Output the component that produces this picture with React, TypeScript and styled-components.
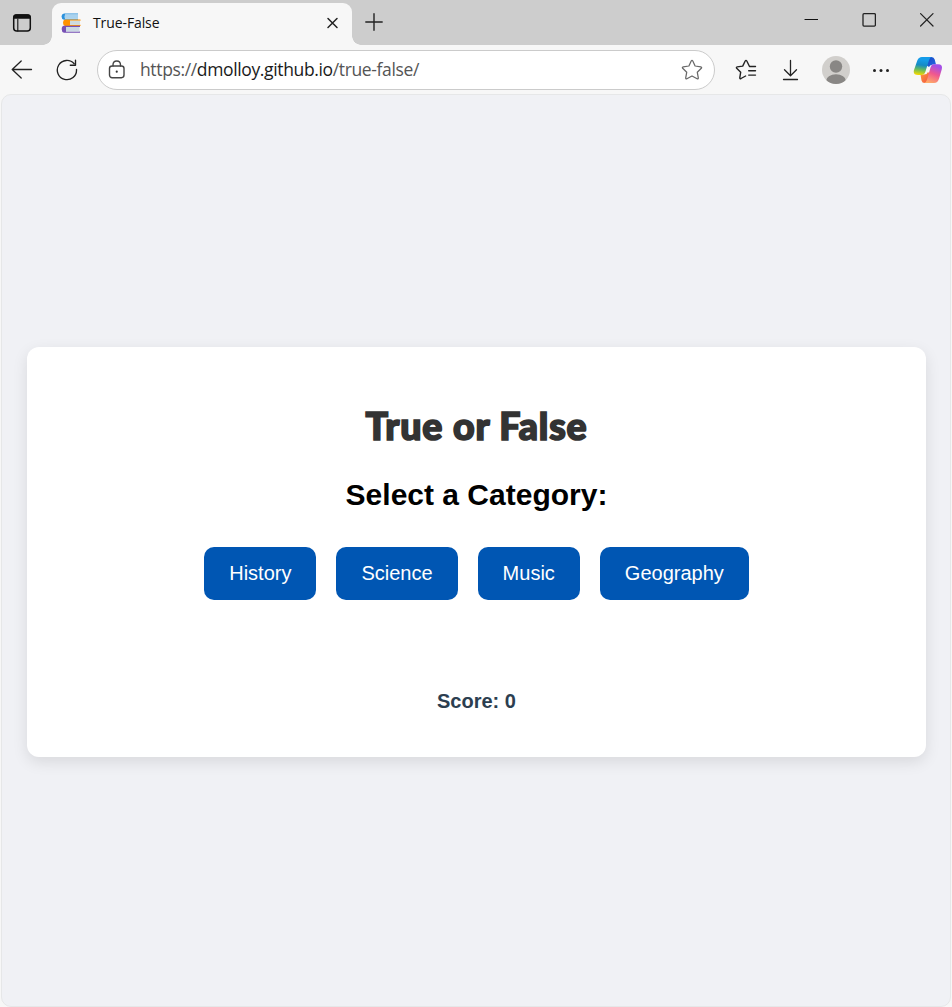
import React from "react";
import styled, { createGlobalStyle } from "styled-components";

const GlobalStyle = createGlobalStyle`
  * { box-sizing: border-box; }
  body { margin: 0; background: #f7f7f7; font-family: "Liberation Sans", Arial, sans-serif; }
  svg { display: block; flex: none; }
`;

const Browser = styled.div`
  width: 952px;
  height: 1007px;
  overflow: hidden;
  display: flex;
  flex-direction: column;
  background: #f7f7f7;
`;

const TabStrip = styled.header`
  height: 45px;
  flex: none;
  display: flex;
  background: #cdcdcd;
`;

const TabActions = styled.div`
  width: 52px;
  padding: 13px 0 0 12px;
`;

const Tab = styled.div`
  position: relative;
  width: 300px;
  height: 42px;
  margin-top: 3px;
  padding: 0 11px 2px 9px;
  display: flex;
  align-items: center;
  background: #f7f7f7;
  border-radius: 9px 9px 0 0;

  &::before,
  &::after {
    content: "";
    position: absolute;
    bottom: 0;
    width: 9px;
    height: 9px;
  }
  &::before {
    left: -9px;
    background: radial-gradient(circle at 0 0, transparent 8.5px, #f7f7f7 9px);
  }
  &::after {
    right: -9px;
    background: radial-gradient(circle at 100% 0, transparent 8.5px, #f7f7f7 9px);
  }
`;

const TabTitle = styled.span`
  flex: 1;
  margin-left: 12px;
  font: 14px/20px "Open Sans", "Noto Sans", sans-serif;
  letter-spacing: -0.1px;
  color: #111;
`;

const NewTab = styled.div`
  padding: 13px 0 0 13px;
`;

const WindowControls = styled.div`
  display: flex;
  gap: 44px;
  margin-left: auto;
  padding: 13px 18px 0 0;
`;

const Toolbar = styled.nav`
  height: 49px;
  flex: none;
  display: flex;
  align-items: center;
  padding: 1px 0 0 11px;
`;

const NavIcons = styled.div`
  display: flex;
  gap: 23px;
  width: 86px;
`;

const AddressBar = styled.div`
  width: 618px;
  height: 40px;
  display: flex;
  align-items: center;
  padding: 0 11px 0 10px;
  border: 1px solid #cbcbcb;
  border-radius: 20px;
  background: #fff;
`;

const Url = styled.span`
  flex: 1;
  margin: -2px 0 0 14px;
  font: 17.5px/24px "Open Sans", "Noto Sans", sans-serif;
  letter-spacing: -0.36px;
  color: #555;
  white-space: nowrap;
`;

const Host = styled.span`
  color: #1a1a1a;
`;

const ToolIcons = styled.div`
  display: flex;
  align-items: center;
  margin-left: 20px;
`;

const ToolSlot = styled.div<{ $gap: number }>`
  margin-left: ${(p) => p.$gap}px;
`;

const Page = styled.main`
  flex: 1;
  margin: 0 1px;
  padding: 0 24px;
  display: flex;
  align-items: flex-start;
  justify-content: center;
  background: #f0f1f5;
  border: 1px solid #e6e7e8;
  border-radius: 10px;
`;

const Card = styled.section`
  width: 899px;
  height: 410px;
  margin-top: 252px;
  padding: 53px 0 0 1px;
  display: flex;
  flex-direction: column;
  align-items: center;
  border-radius: 12px;
  background: #fff;
  box-shadow: 0 5px 15px rgba(0, 0, 0, 0.1);
`;

const Title = styled.h1`
  margin: 0;
  font: 900 37.5px/52px Lato, sans-serif;
  letter-spacing: 0.8px;
  color: #333;
  -webkit-text-stroke: 1.7px #333;
  stroke-linejoin: round;
  white-space: nowrap;
`;

const Subtitle = styled.h2`
  margin: 25px 0 0;
  font-size: 30px;
  line-height: 35px;
  color: #000;
`;

const Categories = styled.div`
  display: flex;
  gap: 20px;
  margin-top: 35px;
`;

const CategoryButton = styled.button`
  height: 53px;
  padding: 0 25px;
  border: 0;
  border-radius: 10px;
  background: #0056b3;
  color: #fff;
  font: 20px/23px "Liberation Sans", Arial, sans-serif;
`;

const Score = styled.p`
  margin: 90px 0 0;
  font-size: 20px;
  font-weight: bold;
  line-height: 23px;
  color: #2c3e50;
`;

const line = { fill: "none", stroke: "#222", strokeLinecap: "round", strokeLinejoin: "round" } as const;

const TabActionsIcon = () => (
  <svg width="20" height="20" {...line} stroke="#111" strokeWidth="1.5">
    <rect x="1.7" y="2" width="16.6" height="16" rx="3" />
    <path d="M2 5V4q0-2 2-2h12q2 0 2 2v1z" fill="#111" />
    <path d="M5.800 6v12" strokeWidth="1.1" />
  </svg>
);

const BooksIcon = () => (
  <svg width="20" height="20">
    <path d="M3 .5h14v1H4v4.200h13v1H3Q.5 6.300.5 3.600T3 .5z" fill="#2b91dc" />
    <path d="M4 1.500h13v4.200H4q-1-2 0-4.200z" fill="#a9d2ee" />
    <path d="M4 6.500h15.500v1.200H9v4h10.500v1.300H4q-2-.4-2-3.200t2-3.300z" fill="#ff9200" />
    <path d="M9 7.700h10v4H9z" fill="#cddbe0" />
    <path d="M3 12.800h16v1.200H5v4.500h14v1.200H3q-2.300-.5-2.300-3.500T3 12.800z" fill="#7750b5" />
    <path d="M5 14h13.500v4.500H5z" fill="#cbd8e3" />
  </svg>
);

const CloseTabIcon = () => (
  <svg width="16" height="16" {...line} strokeWidth="1.5"><path d="M3 3.500l9 9M12 3.500l-9 9" /></svg>
);

const PlusIcon = () => (
  <svg width="18" height="18" {...line} strokeWidth="1.4"><path d="M9 .8v16.400M.8 9h16.400" /></svg>
);

const BackIcon = () => (
  <svg width="22" height="22" {...line} strokeWidth="1.3"><path d="M20.500 10.500H1.200M10.200 2L1.200 10.500l9 8.500" /></svg>
);

const RefreshIcon = () => (
  <svg width="22" height="22" {...line} strokeWidth="1.35">
    <path d="M20.500 10.500A9.600 9.600 0 1 1 18.200 4.800" /><path d="M19.500 1.200v5h-5.200" />
  </svg>
);

const LockIcon = () => (
  <svg width="18" height="20" {...line} stroke="#454545" strokeWidth="1.4">
    <rect x="1.500" y="6" width="14.500" height="11.700" rx="2.600" />
    <path d="M5 6V5q0-4 3.750-4t3.750 4v1" />
    <circle cx="8.750" cy="11.700" r="1.100" fill="#333" stroke="none" />
  </svg>
);

const StarIcon = () => (
  <svg width="22" height="22" {...line} stroke="#686868" strokeWidth="1.25">
    <path d="M10.200 2q.8-1.200 1.600 0l2.300 5 5.700.8q1.400.4.500 1.500l-4 4 1 5.500q.1 1.400-1.200.9L11 17l-5.100 2.700q-1.300.5-1.200-.9l1-5.500-4-4q-.9-1.100.5-1.500l5.700-.8z" />
  </svg>
);

const FavoritesIcon = () => (
  <svg width="22" height="22" {...line} strokeWidth="1.4">
    <path d="M20.500 7.500h-6L11.800 2q-.8-1.300-1.600 0L7.700 7.100l-5.500.8q-1.300.4-.5 1.400l4 3.900-.9 5.500q0 1.400 1.200.8l4.600-2.500" />
    <path d="M13.700 11.800h6.800M13.700 16.100h6.800" />
  </svg>
);

const DownloadIcon = () => (
  <svg width="18" height="22" {...line} strokeWidth="1.3"><path d="M9.500 1.500v15M3.500 10.800l6 6 6-6M2.500 20.500h14" /></svg>
);

const ProfileIcon = () => (
  <svg width="28" height="28">
    <defs><clipPath id="profile"><circle cx="14" cy="14" r="14" /></clipPath></defs>
    <circle cx="14" cy="14" r="14" fill="#d1cfcc" />
    <g fill="#898785" clipPath="url(#profile)"><circle cx="14" cy="10.500" r="6.200" /><ellipse cx="14" cy="25" rx="10" ry="6.700" /></g>
  </svg>
);

const MoreIcon = () => (
  <svg width="18" height="20" fill="#222"><circle cx="2.500" cy="10.500" r="1.500" /><circle cx="9" cy="10.500" r="1.500" /><circle cx="15.500" cy="10.500" r="1.500" /></svg>
);

const CopilotIcon = () => (
  <svg width="30" height="28">
    <defs>
      <linearGradient id="cool" x1="0.500" y1="0" x2="0.350" y2="1"><stop offset="0.150" stopColor="#159ce9" /><stop offset="0.450" stopColor="#168bc4" /><stop offset="0.700" stopColor="#65ba60" /><stop offset="1" stopColor="#f5d900" /></linearGradient>
      <linearGradient id="warm" x1="0.700" y1="0" x2="0.300" y2="1"><stop offset="0.100" stopColor="#a64fe6" /><stop offset="0.500" stopColor="#f0588e" /><stop offset="1" stopColor="#ffad68" /></linearGradient>
      <linearGradient id="fold" x1="0" y1="0" x2="1" y2="1"><stop stopColor="#184ac4" /><stop offset="1" stopColor="#2467e2" /></linearGradient>
      <linearGradient id="base" x1="0" y1="0" x2="1" y2="1"><stop stopColor="#ff9c3c" /><stop offset="1" stopColor="#f14e42" /></linearGradient>
    </defs>
    <path d="M14 1h4.500q2.500 0 3.200 2.500l1.300 5h-3q-3 0-4 2.500L13 9z" fill="url(#fold)" />
    <path d="M7.500 18.500H11q3 0 4-2.500l2 2-2 9h-3.500q-2.300 0-3-2.500z" fill="url(#base)" />
    <path d="M9 1H19q-2 0-3 3.200L12.300 16q-1 3-4 3H5q-5.300 0-4-5L4.300 4.500Q5.500 1 9 1z" fill="url(#cool)" />
    <path d="M20.500 8.200H25q5 0 3.800 5L26 22.800q-1.200 4.200-5 4.200H11q2 0 3-3.200l3.500-12.400q1-3.200 3-3.200z" fill="url(#warm)" />
  </svg>
);

const MinimizeIcon = () => <svg width="14" height="14" {...line} stroke="#111" strokeWidth="1.2"><path d="M1 6.500h12.500" /></svg>;
const MaximizeIcon = () => <svg width="14" height="14" {...line} strokeWidth="1.3"><rect x="1" y=".7" width="12.400" height="12.400" rx="1" /></svg>;
const CloseIcon = () => <svg width="14" height="14" {...line} strokeWidth="1.200"><path d="M.6.600l12.400 12.400M13 .600L.6 13" /></svg>;

const categories = ["History", "Science", "Music", "Geography"];

export default function App() {
  return (
    <>
      <GlobalStyle />
      <Browser>
        <TabStrip>
          <TabActions><TabActionsIcon /></TabActions>
          <Tab><BooksIcon /><TabTitle>True-False</TabTitle><CloseTabIcon /></Tab>
          <NewTab><PlusIcon /></NewTab>
          <WindowControls><MinimizeIcon /><MaximizeIcon /><CloseIcon /></WindowControls>
        </TabStrip>
        <Toolbar>
          <NavIcons><BackIcon /><RefreshIcon /></NavIcons>
          <AddressBar>
            <LockIcon />
            <Url>https://<Host>dmolloy.github.io</Host>/true-false/</Url>
            <StarIcon />
          </AddressBar>
          <ToolIcons>
            <ToolSlot $gap={0}><FavoritesIcon /></ToolSlot>
            <ToolSlot $gap={24}><DownloadIcon /></ToolSlot>
            <ToolSlot $gap={23}><ProfileIcon /></ToolSlot>
            <ToolSlot $gap={22}><MoreIcon /></ToolSlot>
            <ToolSlot $gap={23}><CopilotIcon /></ToolSlot>
          </ToolIcons>
        </Toolbar>
        <Page>
          <Card>
            <Title>True or False</Title>
            <Subtitle>Select a Category:</Subtitle>
            <Categories>
              {categories.map((name) => <CategoryButton key={name}>{name}</CategoryButton>)}
            </Categories>
            <Score>Score: 0</Score>
          </Card>
        </Page>
      </Browser>
    </>
  );
}
